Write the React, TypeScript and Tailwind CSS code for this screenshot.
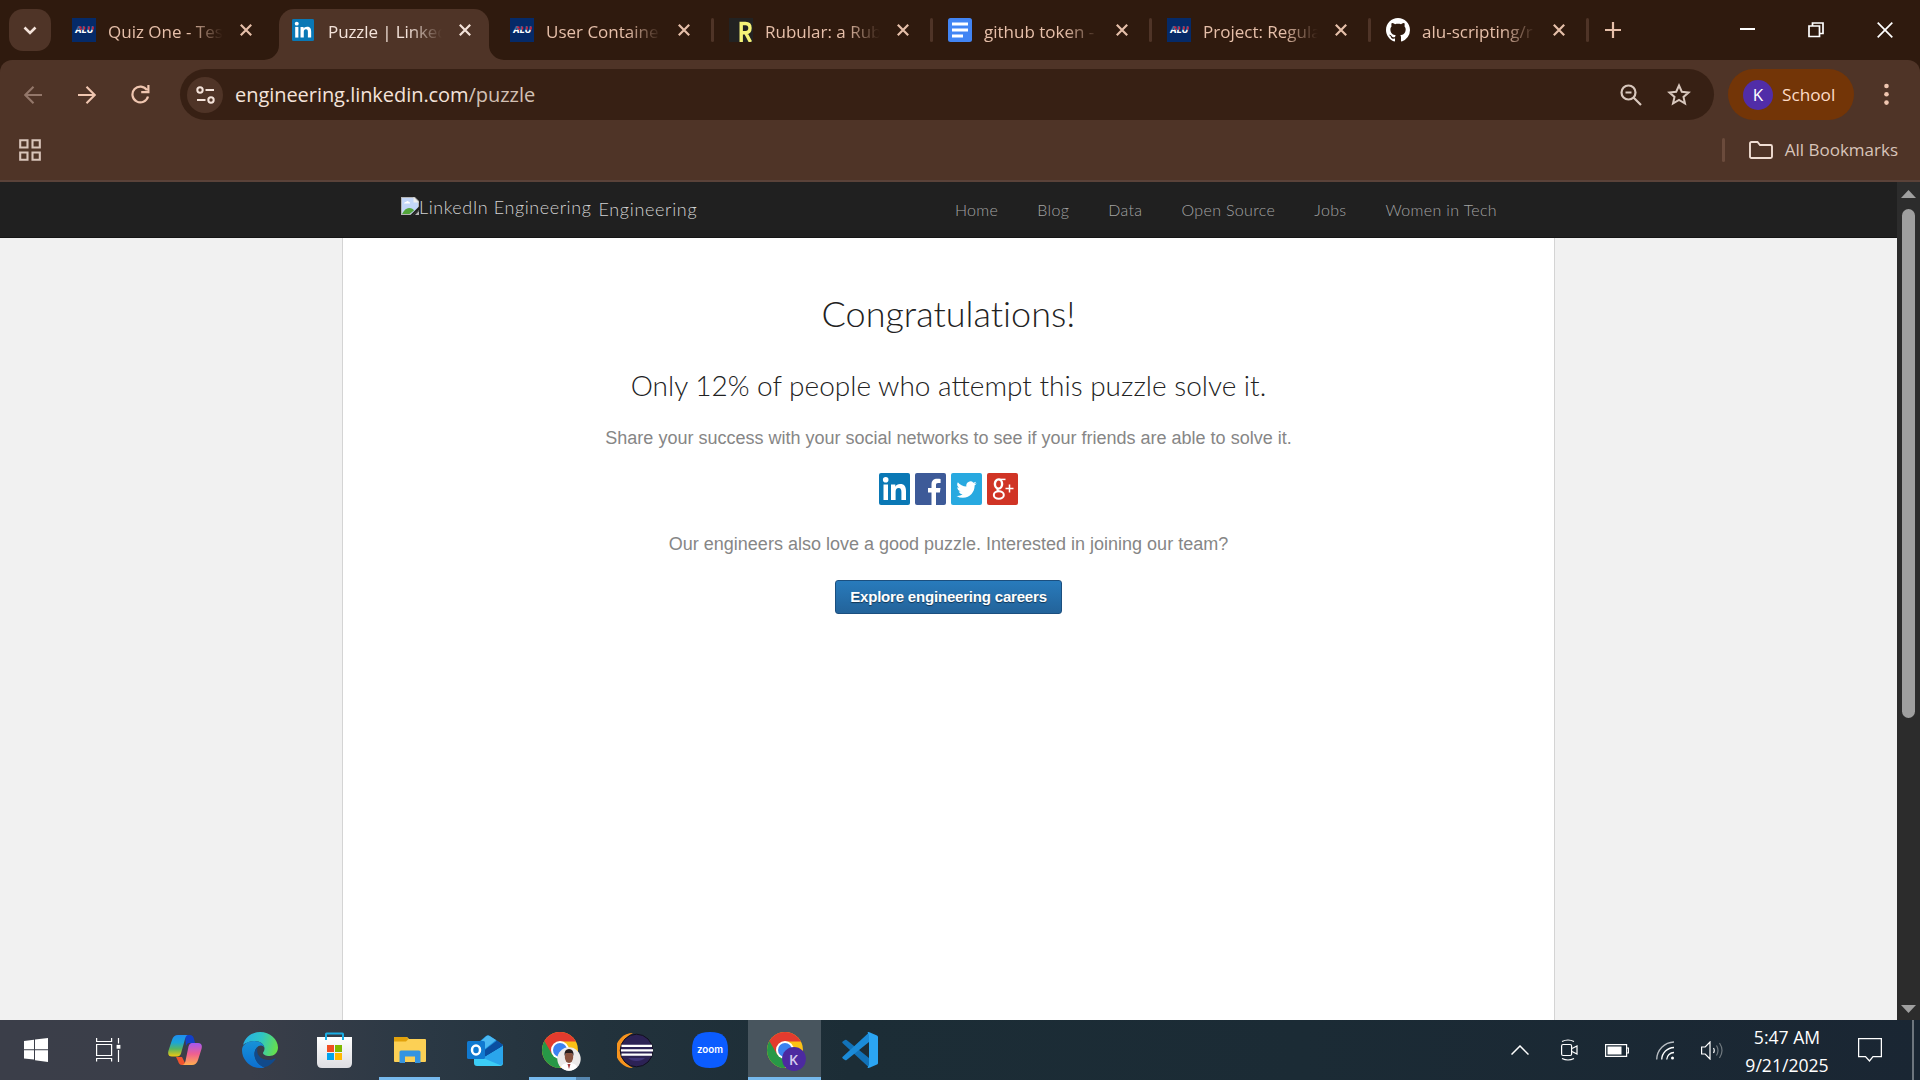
import React from "react";

const UI = "font-['Open_Sans','Noto_Sans',sans-serif]";
const AV = "font-['Lato',sans-serif]";

function Alu() {
  return (
    <svg width="24" height="24" viewBox="0 0 24 24" className="block shrink-0">
      <rect width="24" height="24" fill="#052a68" />
      <text x="12" y="15.200" textAnchor="middle" fontFamily="Inter, sans-serif" fontWeight="800" fontStyle="italic" fontSize="8.500" textLength="18" lengthAdjust="spacingAndGlyphs" fill="#fff">ALU</text>
      <path d="M3 8h19v3.800H3z" fill="#052a68" opacity=".7" />
      <path d="M7.200 9.300h2.300M12.500 8.800v2.800M17 8.800v2.800M21 8.800v2.800M8.500 11.200h1.500" stroke="#d81e3c" strokeWidth="1.500" />
    </svg>
  );
}
function LinkedInMark({ w, h }: { w: number; h: number }) {
  return (
    <svg width={w} height={h} viewBox="0 0 31 32" preserveAspectRatio="none" className="block shrink-0">
      <rect width="31" height="32" rx="2" fill="#0a78b5" />
      <rect x="4.500" y="11.500" width="4.500" height="15.500" fill="#fff" />
      <circle cx="6.700" cy="6.800" r="2.800" fill="#fff" />
      <path d="M12 11.500h4.300v2.200c.8-1.500 2.500-2.600 4.900-2.600 4.400 0 5.800 2.700 5.800 7.200V27h-4.600v-8c0-2.300-.5-4-2.700-4s-3.100 1.600-3.100 4v8H12z" fill="#fff" />
    </svg>
  );
}
function Rubular() {
  return (
    <svg width="24" height="24" viewBox="0 0 24 24" className="block shrink-0">
      <rect width="24" height="24" fill="#222" />
      <path d="M12.200 24V5.500h4.300q4.500 0 4.500 4.600t-4.500 4.600H12.500M16.500 14.500L21.500 24" fill="none" stroke="#f5f277" strokeWidth="3.400" />
    </svg>
  );
}
function Docs() {
  return (
    <svg width="24" height="24" viewBox="0 0 24 24" className="block shrink-0">
      <rect width="24" height="24" rx="2.500" fill="#4285f4" />
      <path d="M4 6h16M4 12h16M4 18h11" stroke="#fff" strokeWidth="2.800" />
    </svg>
  );
}
function GitHub() {
  return (
    <svg width="24" height="24" viewBox="0 0 16 16" fill="#fff" className="block shrink-0">
      <path d="M8 0C3.580 0 0 3.580 0 8c0 3.540 2.290 6.530 5.470 7.590.4.070.55-.17.55-.38 0-.19-.010-.82-.010-1.490-2.010.37-2.530-.49-2.690-.94-.09-.23-.48-.94-.82-1.130-.28-.15-.68-.52-.010-.53.63-.010 1.080.58 1.230.82.72 1.210 1.870.87 2.330.66.070-.52.28-.87.51-1.070-1.780-.2-3.640-.89-3.640-3.950 0-.87.31-1.590.82-2.150-.08-.2-.36-1.020.08-2.120 0 0 .67-.21 2.200.82.64-.18 1.320-.27 2-.27s1.360.09 2 .27c1.530-1.040 2.200-.82 2.200-.82.44 1.100.16 1.920.08 2.120.51.56.82 1.270.82 2.150 0 3.070-1.870 3.750-3.650 3.950.29.25.54.73.54 1.480 0 1.070-.010 1.930-.010 2.200 0 .21.15.46.55.38A8.010 8.010 0 0016 8c0-4.420-3.580-8-8-8z" />
    </svg>
  );
}

const tabs = [
  { t: "Quiz One - Tes", icon: <Alu />, sep: false },
  { t: "Puzzle | Linked", icon: <LinkedInMark w={22} h={22} />, active: true, sep: false },
  { t: "User Containe", icon: <Alu />, sep: true },
  { t: "Rubular: a Rub", icon: <Rubular />, sep: true },
  { t: "github token -", icon: <Docs />, sep: true },
  { t: "Project: Regula", icon: <Alu />, sep: true },
  { t: "alu-scripting/r", icon: <GitHub />, sep: true, last: true },
];

type TabProps = { t: string; icon: React.ReactNode; active?: boolean; sep: boolean; last?: boolean };

function Tab({ t, icon, active, sep, last }: TabProps) {
  const row = (
    <>
      <div className="flex w-9 shrink-0">{icon}</div>
      <div className={`${UI} relative top-[2px] shrink-0 overflow-hidden whitespace-nowrap text-[17px] leading-6 [mask-image:linear-gradient(to_right,#000_70%,transparent_100%)] ${active || last ? "w-[114px]" : "w-[115px]"} ${active ? "tracking-[-0.1px] text-[#f4e3da]" : "text-[#e6bfa9]"}`}>{t}</div>
      <svg width="12" height="12" viewBox="0 0 12 12" className="ml-[17px] block shrink-0">
        <path d="M.8.8l10.400 10.400M11.200.8L.8 11.200" stroke={active ? "#f4e3da" : "#e6bfa9"} strokeWidth="2.200" />
      </svg>
    </>
  );
  if (active)
    return (
      <div className="relative w-[219px] shrink-0 pl-[3px] pt-[9px]">
        <div className="flex h-[51px] w-[210px] items-center rounded-t-[15px] bg-[#4f3427] pb-[9px] pl-[13px]">{row}</div>
        <svg className="absolute bottom-0 left-[-12px]" width="15" height="15"><path d="M15 0v15H0A15 15 0 0 0 15 0z" fill="#4f3427" /></svg>
        <svg className="absolute bottom-0 left-[213px]" width="15" height="15"><path d="M0 0v15h15A15 15 0 0 1 0 0z" fill="#4f3427" /></svg>
      </div>
    );
  return (
    <div className={`flex h-[60px] shrink-0 items-center pl-[15px] ${last ? "w-[218px]" : "w-[219px]"}`}>
      {row}
      {sep && <div className="ml-auto h-6 w-[3px] rounded-sm bg-[#4f3427]" />}
    </div>
  );
}

function Chrome({ id, children }: { id: string; children: React.ReactNode }) {
  return (
    <svg width="42" height="42" viewBox="0 0 42 42" className="block">
      <clipPath id={id}><circle cx="18" cy="21" r="18" /></clipPath>
      <g clipPath={`url(#${id})`}>
        <rect y="3" width="36" height="36" fill="#fbc116" />
        <path d="M0 0h36v12.500H18L10.200 25.500 0 12z" fill="#e33b2e" />
        <path d="M0 10L2.400 12 10.200 25.500 18 30 15 42H0z" fill="#279847" />
        <path d="M18 30l7.800-4.500L17 40h-4z" fill="#279847" />
      </g>
      <circle cx="18" cy="21" r="9" fill="#fff" />
      <circle cx="18" cy="21" r="7" fill="#3c82f0" />
      {children}
    </svg>
  );
}

function TaskItem({ children, className = "w-[73px]" }: { children: React.ReactNode; className?: string }) {
  return <div className={`relative flex h-[60px] shrink-0 items-center justify-center ${className}`}>{children}</div>;
}

export default function App() {
  return (
    <div className="flex h-[1080px] w-[1920px] flex-col overflow-hidden bg-[#2f1a0e]">
      <div className="flex h-[60px] shrink-0">
        <div className="flex w-[57px] shrink-0 items-center pl-[9px]">
          <div className="flex h-[42px] w-[42px] items-center justify-center rounded-[14px] bg-[#4f3427]">
            <svg width="14" height="9" viewBox="0 0 14 9"><path d="M1.500 1.500L7 7l5.500-5.500" fill="none" stroke="#f4e3da" strokeWidth="2.600" /></svg>
          </div>
        </div>
        {tabs.map((t) => <Tab key={t.t} {...t} />)}
        <div className="flex flex-1 items-center pl-4">
          <svg width="16" height="16" viewBox="0 0 16 16"><path d="M8 0v16M0 8h16" stroke="#e6bfa9" strokeWidth="2.200" /></svg>
          <svg className="ml-[119px]" width="15" height="16" viewBox="0 0 15 16"><path d="M0 7h15" stroke="#fff" strokeWidth="2" /></svg>
          <svg className="ml-[53px]" width="16" height="16" viewBox="0 0 16 16"><path d="M1 4h10.500v10.500H1zM4.500 4V1H15v10.500h-3.500" fill="none" stroke="#fff" strokeWidth="1.700" /></svg>
          <svg className="ml-[53px]" width="16" height="16" viewBox="0 0 16 16"><path d="M.7.7l14.600 14.600M15.300.7L.7 15.300" stroke="#fff" strokeWidth="1.700" /></svg>
        </div>
      </div>

      <div className="flex h-[122px] shrink-0 flex-col rounded-t-[12px] border-b-2 border-[#5a4239] bg-[#4f3427]">
        <div className="flex h-[69px] items-center">
          <svg className="ml-6" width="18" height="18" viewBox="0 0 18 18"><path d="M18 9H1.500M9.500.8L1.300 9l8.200 8.200" fill="none" stroke="#93776a" strokeWidth="2.100" /></svg>
          <svg className="ml-9" width="18" height="18" viewBox="0 0 18 18"><path d="M0 9h16.500M8.500.8L16.700 9l-8.200 8.200" fill="none" stroke="#f0c6b0" strokeWidth="2.100" /></svg>
          <svg className="ml-[35px]" width="19" height="19" viewBox="0 0 19 19"><path d="M16 5.200A7.900 7.900 0 1 0 17 11.500M17.400 0v7.200h-7.200" fill="none" stroke="#f0c6b0" strokeWidth="2.200" /></svg>
          <div className="ml-[30px] flex h-[51px] w-[1534px] items-center rounded-full bg-[#372014] pl-[7px]">
            <div className="flex h-9 w-9 items-center justify-center rounded-full bg-[#4f3427]">
              <svg width="19" height="18" viewBox="0 0 19 18" fill="none" stroke="#f4e3da" strokeWidth="2"><circle cx="4" cy="4" r="2.700" /><path d="M9.500 4H18M1 14h8.500" /><circle cx="15" cy="14" r="2.700" /></svg>
            </div>
            <span className={`${UI} ml-3 whitespace-nowrap text-[20px] leading-8 tracking-[-0.05px] text-[#f4e3da]`}>engineering.linkedin.com<span className="text-[#d3c0b4]">/puzzle</span></span>
            <svg className="ml-auto" width="22" height="22" viewBox="0 0 22 22" fill="none" stroke="#d8c7bd" strokeWidth="2.200"><circle cx="8.500" cy="8.500" r="7" /><path d="M13.500 13.500l7.500 7.500M5.500 8.500h6" /></svg>
            <svg className="ml-[25px] mr-[23px]" width="24" height="23" viewBox="0 0 24 23" fill="none" stroke="#d8c7bd" strokeWidth="2"><path d="M12 2.500l2.800 6.200 6.800.7-5.100 4.500 1.500 6.600-6-3.500-6 3.500 1.500-6.600-5.100-4.500 6.800-.7z" /></svg>
          </div>
          <div className="ml-[14px] flex h-[51px] w-[126px] items-center rounded-full bg-[#733507] pl-[15px]">
            <div className={`${UI} flex h-[30px] w-[30px] items-center justify-center rounded-full bg-[#512da8] text-[17px] leading-none text-white`}>K</div>
            <span className={`${UI} ml-[9px] text-[17.200px] leading-6 text-[#ffdcc7]`}>School</span>
          </div>
          <svg className="ml-[30px]" width="5" height="23" viewBox="0 0 5 23" fill="#f0c6b0"><circle cx="2.500" cy="3" r="2.300" /><circle cx="2.500" cy="11.300" r="2.300" /><circle cx="2.500" cy="19.600" r="2.300" /></svg>
        </div>
        <div className="flex h-[42px] items-center pl-[19px] pr-[22px]">
          <svg width="22" height="22" viewBox="0 0 22 22" fill="none" stroke="#d8c4ba" strokeWidth="2.100"><path d="M1.200 1.200h7.300v7.300H1.200zM13.500 1.200h7.300v7.300h-7.300zM1.200 13.500h7.300v7.300H1.200zM13.500 13.500h7.300v7.300h-7.300z" /></svg>
          <div className="ml-auto h-6 w-[3px] rounded bg-[#6b4b3c]" />
          <svg className="ml-6" width="24" height="18" viewBox="0 0 24 18"><path d="M1 2.500Q1 1 2.500 1h6l2.500 3h10.500Q23 4 23 5.500v10q0 1.500-1.500 1.500h-19Q1 17 1 15.500z" fill="none" stroke="#f0ddd3" strokeWidth="1.900" /></svg>
          <span className={`${UI} ml-3 whitespace-nowrap text-[17px] leading-6 text-[#d8c4ba]`}>All Bookmarks</span>
        </div>
      </div>

      <div className="flex h-[838px] shrink-0">
        <div className="flex w-[1897px] flex-col bg-[#f1f1f1]">
          <div className={`${AV} flex h-14 shrink-0 border-b border-[#151515] bg-[#202020] pl-[401px] font-light text-[#d2d2d2]`}>
            <svg className="mt-[15px] block shrink-0" width="18" height="18" viewBox="0 0 18 18">
              <path d="M0 0h12.500L18 5.500V12L10 18H0z" fill="#c3d6f8" stroke="#b4b4b4" strokeWidth="2" />
              <path d="M12.500 0v5.500H18z" fill="#eee" />
              <path d="M3 6.500q.5-2 2-1.500 1.500-2 3 0 1.500.3 1 1.500z" fill="#fff" />
              <path d="M1 17q3-6 7-6 4 0 5 2.500L8.500 17z" fill="#52a43a" />
              <path d="M9.500 18L18 9.500V13l-6 5z" fill="#202020" />
              <path d="M14 18l4-4v4z" fill="#b4b4b4" />
            </svg>
            <span className="mt-[13px] whitespace-nowrap text-[18px] leading-6 tracking-[0.58px]">LinkedIn Engineering</span>
            <span className="ml-[7px] mt-[15px] text-[18px] leading-6 tracking-[0.68px]">Engineering</span>
            <nav className="ml-auto mr-[400px] mt-4 flex gap-[39px] whitespace-nowrap text-[16px] leading-6 tracking-[0.35px] text-[#a3a3a3]">
              {["Home", "Blog", "Data", "Open Source", "Jobs", "Women in Tech"].map((n) => <span key={n}>{n}</span>)}
            </nav>
          </div>
          <main className="mx-auto flex w-[1213px] flex-1 flex-col items-center border-x border-[#d4d4d4] bg-white font-['Liberation_Sans',sans-serif] text-[#868686]">
            <h1 className={`${AV} mt-[51px] text-[36px] font-light leading-[48px] text-[#222] [font-variant-ligatures:none]`}>Congratulations!</h1>
            <h2 className={`${AV} mt-6 text-[28px] font-light leading-[48px] text-[#222]`}>Only 12% of people who attempt this puzzle solve it.</h2>
            <p className="mt-[17px] text-[18px] leading-6">Share your success with your social networks to see if your friends are able to solve it.</p>
            <div className="mt-[23px] flex gap-[5px]">
              <LinkedInMark w={31} h={32} />
              <svg width="31" height="32" viewBox="0 0 31 32"><rect width="31" height="32" rx="2" fill="#3d5a98" /><path d="M16.500 32V19.500H13V15h3.500v-3.500c0-4 2.300-5.700 5.700-5.700 1.600 0 3 .1 3.400.2v4h-2.400c-1.800 0-2.200.9-2.200 2.200V15h4.500l-.6 4.500H21V32z" fill="#fff" /></svg>
              <svg width="31" height="32" viewBox="0 0 31 32"><rect width="31" height="32" rx="2" fill="#28a9e0" /><path transform="translate(5.500 6.500) scale(.84)" d="M23.950 4.570a10 10 0 0 1-2.820.77 4.960 4.960 0 0 0 2.160-2.720c-.95.550-2 .950-3.130 1.180a4.920 4.920 0 0 0-8.380 4.480C7.690 8.090 4.070 6.130 1.640 3.160a4.920 4.920 0 0 0 1.520 6.570 4.900 4.900 0 0 1-2.230-.61v.06c0 2.390 1.700 4.380 3.950 4.830a5 5 0 0 1-2.210.08 4.940 4.940 0 0 0 4.600 3.420A9.870 9.870 0 0 1 0 19.540a14 14 0 0 0 7.550 2.210c9.050 0 14-7.500 14-13.980 0-.21 0-.42-.02-.63a9.940 9.940 0 0 0 2.460-2.550z" fill="#fff" /></svg>
              <svg width="31" height="32" viewBox="0 0 31 32"><rect width="31" height="32" rx="2" fill="#d03425" /><g fill="none" stroke="#fff"><ellipse cx="11.500" cy="11" rx="3.600" ry="4.600" strokeWidth="2.400" /><path d="M12 6.400h6.500" strokeWidth="1.500" /><path d="M11 15.500q-1.500 1.500 1 3" strokeWidth="2" /><ellipse cx="11.800" cy="22" rx="5" ry="3.800" strokeWidth="2" /><path d="M18.500 15.500h8M22.500 11.500v8" strokeWidth="1.500" /></g></svg>
            </div>
            <p className="mt-[27px] text-[18px] leading-6">Our engineers also love a good puzzle. Interested in joining our team?</p>
            <button className="mt-6 h-[34px] w-[227px] whitespace-nowrap rounded-[3px] border border-[#1b4f7f] bg-linear-to-b from-[#287bbc] to-[#23639a] text-[15px] font-bold leading-[30px] tracking-[-0.19px] text-white [text-shadow:0_1px_1px_rgba(0,0,0,.5)]">Explore engineering careers</button>
          </main>
        </div>
        <div className="flex w-[23px] flex-col items-center bg-[#2c2c2c]">
          <svg className="mt-2 block shrink-0" width="15" height="8"><path d="M0 8h15L7.500 0z" fill="#9f9f9f" /></svg>
          <div className="mt-[11px] h-[509px] w-[13px] rounded-full bg-[#9f9f9f]" />
          <svg className="mb-[7px] mt-auto block shrink-0" width="15" height="8"><path d="M0 0h15L7.500 8z" fill="#9f9f9f" /></svg>
        </div>
      </div>

      <div className="flex h-[60px] shrink-0 bg-[linear-gradient(90deg,#3b3e49_0px,#3a3e49_250px,#2a3844_430px,#22323c_600px,#1c2d36_850px,#1b2b35_1300px,#1a2633_1920px)]">
        <TaskItem className="w-[72px]"><svg width="24" height="24" viewBox="0 0 24 24" fill="#fff"><path d="M0 3l10-1.300V11.200H0zM11 1.500L24 0v11.200H11zM0 12.200h10v9.300L0 20.500zM11 12.200h13V24l-13-1.700z" /></svg></TaskItem>
        <TaskItem className="mr-[3px] w-[73px]"><svg width="25" height="24" viewBox="0 0 25 24" fill="none" stroke="#fff" strokeWidth="1.200"><path d="M.6 0v3.500h15V0M.6 6.500h15v11H.6zM.6 23.500v-3h15v3M22.500 0v5.500M22.500 12v12" /><rect x="21.200" y="7.500" width="2.600" height="2.600" fill="#fff" /></svg></TaskItem>
        <div className="flex gap-[2px]">
          <TaskItem>
            <svg width="34" height="30" viewBox="0 0 34 30">
              <defs>
                <linearGradient id="cp1" x1="0" y1="0" x2="0" y2="1"><stop offset="0" stopColor="#1f8df0" /><stop offset=".35" stopColor="#1ba5d8" /><stop offset=".65" stopColor="#58b560" /><stop offset="1" stopColor="#f2c80f" /></linearGradient>
                <linearGradient id="cp2" x1="0" y1="0" x2="0" y2="1"><stop offset="0" stopColor="#a558f0" /><stop offset=".5" stopColor="#f0608f" /><stop offset="1" stopColor="#ffae4f" /></linearGradient>
              </defs>
              <path d="M17 0h5q3 0 4 4l1 4h-6q-2 0-3 3z" fill="#1340c8" />
              <path d="M8 22h6l4 8h-4q-3 0-4-4z" fill="#f0542f" />
              <path d="M10 0h10q-2 0-3 4l-4 14.500q-1 3-4 3H4q-5 0-3.500-6L4 5Q5.500 0 10 0z" fill="url(#cp1)" />
              <path d="M24 8h6q5 0 3.500 6L30 25q-1.500 5-6 5H14q2.500 0 3.500-4l3-14.500q1-3.500 3.500-3.500z" fill="url(#cp2)" />
            </svg>
          </TaskItem>
          <TaskItem>
            <svg width="36" height="36" viewBox="0 0 36 36">
              <defs>
                <linearGradient id="eg1" x1="0" y1=".3" x2="1" y2=".5"><stop offset="0" stopColor="#27aee5" /><stop offset=".5" stopColor="#2fc6c4" /><stop offset="1" stopColor="#66e04c" /></linearGradient>
                <linearGradient id="eg2" x1="0" y1="0" x2="0" y2="1"><stop offset="0" stopColor="#1792d8" /><stop offset="1" stopColor="#0c6fd0" /></linearGradient>
              </defs>
              <path d="M1 13C3 5 10 0 18 0c10 0 18 7.500 18 15.500 0 5-4 8.500-8.500 8.500-4 0-6.500-1.500-6.500-3 0-1 1.500-1.800 1.500-4.500C22.500 12 18 9 12.500 9 7 9 2 12 1 13z" fill="url(#eg1)" />
              <path d="M0 18C0 13 5 9 12 9c6 0 10.500 3.500 10.500 7.500 0-2-2-3-3.500-3-4 0-6.500 4.500-6.500 8.500 0 7 5.500 12 10 13.200C21 36 19.500 36 18 36 8 36 0 28 0 18z" fill="url(#eg2)" />
              <path d="M15.500 15C13.500 17 12.500 19.500 12.500 22c0 7 5.500 12.500 10 13.200 4-1 8.500-4 11-8 .5-.7-.2-1-.8-.7-2 1-4 1.500-6 1.500-6.500 0-11.500-4-11.500-9 0-2 .3-3 .3-4z" fill="#114a8b" />
            </svg>
          </TaskItem>
          <TaskItem>
            <svg width="35" height="36" viewBox="0 0 35 36">
              <defs><linearGradient id="st" x1="0" y1="0" x2="0" y2="1"><stop offset="0" stopColor="#fff" /><stop offset="1" stopColor="#dedee2" /></linearGradient></defs>
              <path d="M0 5h35v26q0 5-5 5H5q-5 0-5-5z" fill="url(#st)" />
              <path d="M9 8V2q0-.5.500-.5h16q.5 0 .5.500v6" fill="none" stroke="#1aaee5" strokeWidth="2" />
              <path d="M10 13h7v7h-7z" fill="#f04e23" /><path d="M18 13h7v7h-7z" fill="#7fb900" /><path d="M10 21h7v7h-7z" fill="#00a3ee" /><path d="M18 21h7v7h-7z" fill="#ffb800" />
            </svg>
          </TaskItem>
          <TaskItem>
            <svg width="32" height="27" viewBox="0 0 32 27">
              <path d="M0 1q0-1 1-1h12l2 2H31q1 0 1 1v21q0 1-1 1H1q-1 0-1-1z" fill="#fcd055" />
              <path d="M0 1q0-1 1-1h11.500l2 2-2.500 2.500H0z" fill="#e2a10b" />
              <path d="M5.500 26V15q0-1.500 1.500-1.500h18q1.500 0 1.500 1.500v11h-5.500v-6.500H11V26z" fill="#3594e0" />
            </svg>
            <div className="absolute bottom-0 left-[6px] h-[3px] w-[61px] bg-[#76b9ed]" />
          </TaskItem>
          <TaskItem>
            <svg width="36" height="31" viewBox="0 0 36 31">
              <path d="M7 11L19 1q2-1.500 4 0l13 9v8L10 30z" fill="#1a8fdc" />
              <path d="M12 8l7.500-7q1.500-1 3 0L29 5 14 17z" fill="#4ab8f2" />
              <path d="M15 17L30 5.500l6 4.500-3 4-15 8z" fill="#0a4ea0" />
              <path d="M7 20l11 2 18-11v17q0 3-3 3H10q-3 0-3-3z" fill="#3ccdf6" />
              <path d="M16 23l20-12v16q0 3-3 3z" fill="#2aa5ec" />
              <rect y="6" width="18" height="18" rx="1.500" fill="#1079d0" />
              <ellipse cx="9" cy="15" rx="4" ry="4.500" fill="none" stroke="#fff" strokeWidth="2.500" />
            </svg>
          </TaskItem>
          <TaskItem>
            <div className="pl-[6px]">
              <Chrome id="c1">
                <circle cx="27" cy="30" r="11.700" fill="#eceae9" />
                <path d="M19 38q1-4 8-4t8 4q-3 3.700-8 3.700T19 38z" fill="#fff" />
                <ellipse cx="27" cy="28" rx="4.200" ry="6" fill="#87523e" />
                <path d="M22.500 27q-.5-7 4.500-7t4.500 7l-1.500-3h-6z" fill="#241b1a" />
                <path d="M25.500 35h3l-1.500 5z" fill="#a53c3e" />
              </Chrome>
            </div>
            <div className="absolute bottom-0 left-[6px] h-[3px] w-[47px] bg-[#76b9ed]" />
            <div className="absolute bottom-0 left-[53px] h-[3px] w-[14px] bg-[#5686ae]" />
          </TaskItem>
          <TaskItem>
            <svg width="36" height="35" viewBox="0 0 36 35">
              <path d="M16 0A17.500 17.500 0 0 0 16 35 19 19 0 0 1 16 0z" fill="#f7941e" />
              <circle cx="19.500" cy="17.500" r="16.300" fill="#2c2255" stroke="#120f1e" strokeWidth="1" />
              <path d="M4.500 12.800h30.500M4 17.300h32M4.500 21.600h30.500" stroke="#fff" strokeWidth="2.200" />
              <path d="M11 25h17q-3 3-8.500 3T11 25z" fill="#41367a" />
            </svg>
          </TaskItem>
          <TaskItem>
            <svg width="36" height="36" viewBox="0 0 36 36">
              <path d="M18 0C31 0 36 5 36 18S31 36 18 36 0 31 0 18 5 0 18 0z" fill="#0b5cff" />
              <text x="18" y="21" textAnchor="middle" fontFamily="Inter, sans-serif" fontWeight="600" fontSize="10" textLength="26" lengthAdjust="spacingAndGlyphs" fill="#fff">zoom</text>
            </svg>
          </TaskItem>
          <TaskItem className="w-[73px] bg-[#48555e]">
            <div className="pl-[6px]">
              <Chrome id="c2">
                <circle cx="27" cy="30" r="11.900" fill="#4c2aa0" />
                <text x="26.500" y="35.500" textAnchor="middle" fontFamily="Open Sans, sans-serif" fontWeight="600" fontSize="14" fill="#d6cbee">K</text>
              </Chrome>
            </div>
            <div className="absolute bottom-0 left-0 h-[3px] w-[73px] bg-[#76b9ed]" />
          </TaskItem>
          <TaskItem>
            <svg width="36" height="36" viewBox="0 0 36 36">
              <path d="M1 11.500q-1.500-1 0-2.200L3 8q.8-.5 1.600 0L27 26v9.500z" fill="#1272b8" />
              <path d="M1 24.500q-1.500 1 0 2.200L3 28q.8.500 1.600 0L27 10V.5z" fill="#1b8bd8" />
              <path d="M25.500 35.700L27 33V3L25.500.3Q26.500-.2 28 .4l7 3.200q1 .5 1 1.500v25.800q0 1-1 1.500l-7 3.200q-1.500.6-2.500.1z" fill="#2ba5f3" />
            </svg>
          </TaskItem>
        </div>
        <div className="ml-auto flex items-center">
          <svg width="18" height="10" viewBox="0 0 18 10"><path d="M.5 9.500L9 1l8.500 8.500" fill="none" stroke="#fff" strokeWidth="1.500" /></svg>
          <svg className="ml-8" width="17" height="22" viewBox="0 0 17 22" fill="none" stroke="#fff" strokeWidth="1.200"><rect x=".6" y="5.500" width="10" height="11" rx="1.500" /><path d="M11 9.500l5-2.500v8l-5-2.500M1 2.500Q7 -.5 13 2.500M1 19.500q6 3 12 0" /></svg>
          <svg className="ml-[27px]" width="24" height="13" viewBox="0 0 24 13"><path d="M.6.6h21v11.800H.6zM22 4h1.500v5H22" fill="none" stroke="#fff" strokeWidth="1.200" /><path d="M2.500 2.500h14v8h-14z" fill="#fff" /></svg>
          <svg className="ml-[27px]" width="18" height="19" viewBox="0 0 18 19" fill="none" stroke="#fff" strokeWidth="1.300"><path d="M.7 18.500A17.800 17.800 0 0 1 18 1" stroke="#b9bec3" /><path d="M5.700 18.500A12.500 12.500 0 0 1 18 6.500M10.700 18.500a7.500 7.500 0 0 1 7.300-7" /><circle cx="16.500" cy="17" r="1.500" fill="#fff" stroke="none" /></svg>
          <svg className="ml-[27px]" width="23" height="19" viewBox="0 0 23 19" fill="none" stroke="#fff" strokeWidth="1.200"><path d="M.6 6h3.600L9 1v17l-4.800-5H.6zM12.500 7q1.500 2.500 0 5" /><path d="M15.500 4.500q3 5 0 10M18.500 2q5 7.500 0 15" stroke="#70797f" /></svg>
          <div className={`${UI} ml-[21px] flex w-[84px] flex-col items-center whitespace-nowrap pt-[2px] text-[17.600px] leading-7 text-white`}>
            <span>5:47 AM</span>
            <span>9/21/2025</span>
          </div>
          <svg className="ml-[29px]" width="24" height="24" viewBox="0 0 24 24"><path d="M.6.6h22.800v18H15L11.500 23 7.500 18.600H.6z" fill="none" stroke="#fff" strokeWidth="1.300" /></svg>
          <div className="ml-[30px] mr-[6px] h-[60px] w-[2px] bg-[#6d757e]" />
        </div>
      </div>
    </div>
  );
}
